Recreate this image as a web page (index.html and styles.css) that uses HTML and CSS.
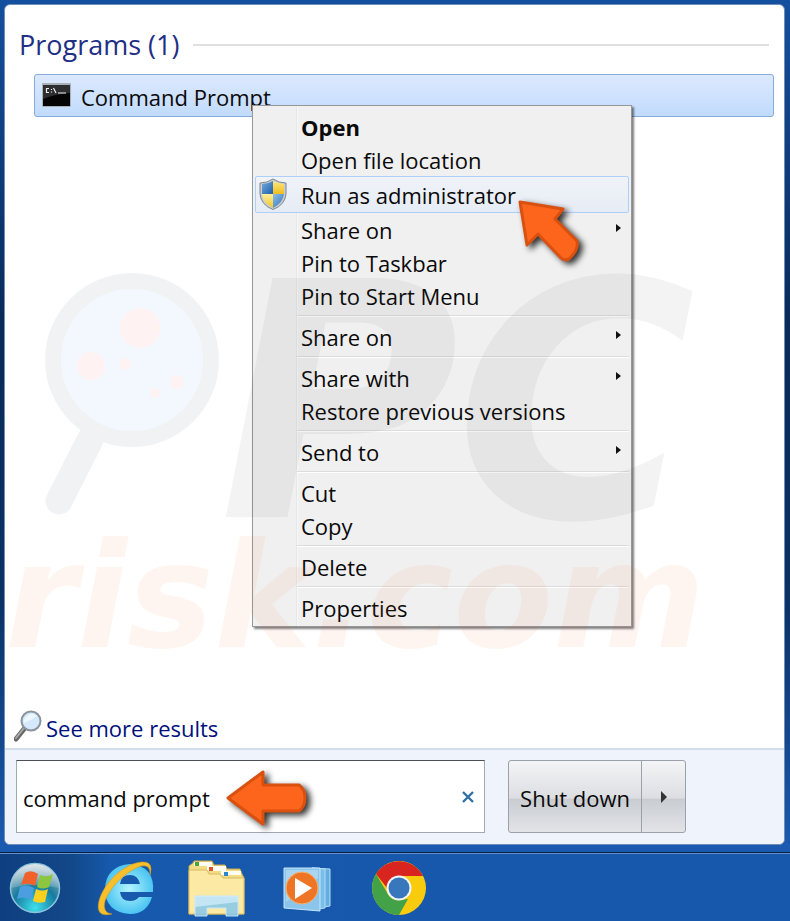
FILE: index.html
```html
<!DOCTYPE html>
<html lang="en">
<head>
    <meta charset="UTF-8">
    <meta name="viewport" content="width=device-width, initial-scale=1.0">
    <title>Start Menu</title>
    <link rel="stylesheet" href="styles.css">
</head>
<body>
    <main class="start-menu">
        <section class="results">
            <div class="group-title">
                <h1>Programs (1)</h1>
                <hr>
            </div>
            <div class="result-wrap">
                <a class="result" href="#">
                    <svg class="cmd-icon" width="31" height="26" viewBox="0 0 31 26">
                        <rect x="1" y="1" width="29" height="24" rx="1" fill="#a9b0b8"/>
                        <rect x="2" y="3" width="27" height="21" fill="#050505"/>
                        <path d="M2 3h27v8Q14 12 2 17z" fill="#2c2e30"/>
                        <path d="M8 6.500H5.500V10.500H8M10.500 7v1M10.500 9.500v1M12.500 6l2.500 5M17 11h8" fill="none" stroke="#eee" stroke-width="1.200"/>
                    </svg>
                    <span>Command Prompt</span>
                </a>
                <div class="context-menu">
                    <button class="item"><b>Open</b></button>
                    <button class="item">Open file location</button>
                    <button class="item active">
                        <svg class="shield" width="28" height="32" viewBox="0 0 28 32">
                            <defs>
                                <clipPath id="shieldClip"><path d="M14 3Q19 6 25 6V16Q24 25 14 30Q4 25 3 16V6Q9 6 14 3z"/></clipPath>
                                <linearGradient id="blueQ" x1="0" y1="0" x2="1" y2="1"><stop offset="0" stop-color="#8fbfe8"/><stop offset="1" stop-color="#1c5fae"/></linearGradient>
                                <linearGradient id="yellowQ" x1="0" y1="0" x2="0" y2="1"><stop offset="0" stop-color="#fff09a"/><stop offset="1" stop-color="#efbd1c"/></linearGradient>
                            </defs>
                            <path d="M14 1Q20 5 27 5V16Q26 27 14 31.500Q2 27 1 16V5Q8 5 14 1z" fill="#c9ced3" stroke="#7d858c"/>
                            <g clip-path="url(#shieldClip)">
                                <rect width="14" height="16" fill="url(#blueQ)"/>
                                <rect x="14" width="14" height="16" fill="url(#yellowQ)"/>
                                <rect y="16" width="14" height="16" fill="url(#yellowQ)"/>
                                <rect x="14" y="16" width="14" height="16" fill="url(#blueQ)"/>
                            </g>
                        </svg>
                        Run as administrator
                    </button>
                    <button class="item sub">Share on</button>
                    <button class="item">Pin to Taskbar</button>
                    <button class="item">Pin to Start Menu</button>
                    <hr>
                    <button class="item sub">Share on</button>
                    <hr>
                    <button class="item sub">Share with</button>
                    <button class="item">Restore previous versions</button>
                    <hr>
                    <button class="item sub">Send to</button>
                    <hr>
                    <button class="item">Cut</button>
                    <button class="item">Copy</button>
                    <hr>
                    <button class="item">Delete</button>
                    <hr>
                    <button class="item">Properties</button>
                    <svg class="arrow arrow-menu" width="74" height="74" viewBox="0 0 74 74">
                        <path d="M5 5L48 12L40 22L62 44Q64 53 54 62Q49 64 46 61L23 37L12 48z" fill="#fd651c" stroke="#d9500f" stroke-width="3" stroke-linejoin="round"/>
                    </svg>
                </div>
            </div>
            <a class="more" href="#">
                <svg width="28" height="32" viewBox="0 0 28 32">
                    <path d="M10 19L2 29" stroke="#666" stroke-width="5" stroke-linecap="round"/>
                    <path d="M10 18L2 28" stroke="#aaa" stroke-width="2" stroke-linecap="round"/>
                    <circle cx="17" cy="11" r="9.500" fill="#d4e9fb" stroke="#8c9299" stroke-width="2"/>
                    <path d="M10 13Q16 11 23 6A8 8 0 0 0 10 13z" fill="#eef7ff"/>
                </svg>
                See more results
            </a>
        </section>
        <footer class="search-bar">
            <div class="search-box">
                <input type="text" value="command prompt" aria-label="Search programs and files">
                <button class="clear" aria-label="Clear">
                    <svg width="12" height="12" viewBox="0 0 12 12"><path d="M1 1L11 11M11 1L1 11" stroke="#2f71a3" stroke-width="2.400"/></svg>
                </button>
                <svg class="arrow arrow-search" width="88" height="62" viewBox="0 0 88 62">
                    <path d="M3 31L38 5V18H74Q80 22 80 31Q80 40 74 44H38V57z" fill="#fd651c" stroke="#d9500f" stroke-width="3" stroke-linejoin="round"/>
                </svg>
            </div>
            <div class="power">
                <button class="shutdown">Shut down</button>
                <button class="power-more" aria-label="More options"></button>
            </div>
        </footer>
        <svg class="watermark" width="780" height="400" viewBox="0 0 780 400" aria-hidden="true">
            <path d="M85 175L54 236" stroke="#1e3c50" stroke-width="27" stroke-linecap="round"/>
            <circle cx="127" cy="95" r="79" fill="#4295ef" stroke="#1e3c50" stroke-width="16"/>
            <g fill="#f33">
                <circle cx="135" cy="63" r="20"/><circle cx="86" cy="101" r="14"/><circle cx="120" cy="99" r="6"/><circle cx="172" cy="117" r="7"/><circle cx="150" cy="128" r="5"/>
            </g>
            <text class="pc" x="214" y="252">P</text>
            <text class="pc" x="450" y="252">C</text>
            <text class="risk" x="0" y="382">risk.com</text>
        </svg>
    </main>
    <nav class="taskbar">
        <button aria-label="Start">
            <svg width="56" height="56" viewBox="0 0 56 56">
                <defs>
                    <radialGradient id="orb" cx=".5" cy=".9" r=".9"><stop offset="0" stop-color="#3fe0ee"/><stop offset=".5" stop-color="#157b9f"/><stop offset="1" stop-color="#a9b9c2"/></radialGradient>
                    <linearGradient id="gloss" x1="0" y1="0" x2="0" y2="1"><stop offset="0" stop-color="#fff" stop-opacity=".65"/><stop offset="1" stop-color="#fff" stop-opacity=".15"/></linearGradient>
                </defs>
                <circle cx="28" cy="28" r="24.500" fill="url(#orb)" stroke="#8cc3dc" stroke-width="1.500"/>
                <path d="M4 28A24 24 0 0 1 52 28Q28 22 4 28z" fill="url(#gloss)"/>
                <path d="M18 13Q24 9 31 14L28 26Q21 22 14 25z" fill="#f0622a"/>
                <path d="M33 15Q39 18 46 14L42 27Q36 30 30 27z" fill="#8cc63f"/>
                <path d="M13 27Q20 24 27 28L24 40Q17 36 10 39z" fill="#4b9fe0"/>
                <path d="M29 29Q35 32 41 29L38 42Q31 44 26 41z" fill="#fcd01e"/>
            </svg>
        </button>
        <button aria-label="Internet Explorer">
            <svg width="60" height="60" viewBox="0 0 60 60">
                <defs><radialGradient id="ie"><stop offset="0" stop-color="#b2f4ff"/><stop offset="1" stop-color="#4cc5f2"/></radialGradient></defs>
                <path fill-rule="evenodd" d="M57 34H24Q25 43 34 43Q40 43 43 39H56Q51 56 34 56Q9 54 9 31Q10 8 34 6Q59 8 57 34zM24 26H44Q42 17 34 17Q25 17 24 26z" fill="url(#ie)"/>
                <path d="M54 17Q58 3 46 4C29 5 8 24 3 43Q-1 60 16 56Q6 55 9 43C15 27 31 13 45 8Q55 6 54 17z" fill="#f7bf2b" stroke="#d99a16" stroke-width=".6"/>
            </svg>
        </button>
        <button aria-label="Windows Explorer">
            <svg width="60" height="60" viewBox="0 0 60 60">
                <path d="M2 56V8L6 5L7 3H25L27 7H38L40 11H53L55 16L57 20V56z" fill="#f4dc86" stroke="#c7a64f"/>
                <path d="M7 4H25V8H7zM20 8H39V13H20zM34 13H54V17H34z" fill="#fffdf2"/>
                <path d="M8 4h4v4H8z" fill="#4aa832"/><path d="M22 9h4v4h-4z" fill="#dd5326"/><path d="M37 14h4v4h-4z" fill="#2e86c8"/>
                <path d="M2 12H20L22 16H33L36 20H57V56H2z" fill="#fbe9a4" stroke="#d8bb64"/>
                <path d="M8 58V38H51V58H39V50H20V58z" fill="#8cc9e8" fill-opacity=".9" stroke="#c5e9f8"/>
                <path d="M8 38H51V44L8 49z" fill="#d7f0fb" fill-opacity=".7"/>
            </svg>
        </button>
        <button aria-label="Windows Media Player">
            <svg width="52" height="50" viewBox="0 0 52 50">
                <path d="M30 5L48 6V43L30 46z" fill="#65ade0" stroke="#b3dcf4"/>
                <path d="M30 5L43 6V45L30 47z" fill="#79bde9" stroke="#b3dcf4"/>
                <path d="M2 5H38V48L2 45z" fill="#8cc5ec" stroke="#c6e7fa"/>
                <path d="M4 7H36V15L4 39z" fill="#bddff5" fill-opacity=".6"/>
                <circle cx="20" cy="25" r="16" fill="#ee7426" stroke="#f8b06d"/>
                <path d="M13 15L30 25L13 36z" fill="#fff"/>
            </svg>
        </button>
        <button aria-label="Google Chrome">
            <svg width="56" height="56" viewBox="0 0 56 56">
                <circle cx="28" cy="28" r="27" fill="#f8cb0d"/>
                <path d="M5 14A27 27 0 0 1 52 16H28Q18 17 16 28z" fill="#d8251f"/>
                <path d="M5 14L17.500 35Q21 41 29 40L37 39L28 55A27 27 0 0 1 5 14z" fill="#43a247"/>
                <circle cx="28" cy="28" r="12.500" fill="#f3f5f7"/>
                <circle cx="28" cy="28" r="10.500" fill="#3877bc"/>
            </svg>
        </button>
    </nav>
</body>
</html>
```
FILE: styles.css
```css
*{
    box-sizing: border-box;
}
body{
    margin: 0;
    min-height: 100vh;
    display: flex;
    flex-direction: column;
    background: linear-gradient(#1450a0, #092a5a 35%, #0b3165 65%, #1a5ab0 92%);
    font-family: "Open Sans", "Noto Sans", sans-serif;
    font-size: 22px;
    color: #0a0a0a;
}
button, input{
    font: inherit;
    color: inherit;
    margin: 0;
    padding: 0;
    border: none;
    background: none;
}
a{
    text-decoration: none;
}
.start-menu{
    position: relative;
    flex: 1;
    display: flex;
    flex-direction: column;
    margin: 4px 5px 7px 4px;
    border: 1px solid #6f8db5;
    border-radius: 6px;
    background: #fff;
}
.results{
    flex: 1;
    display: flex;
    flex-direction: column;
    padding: 20px 10px 2px 9px;
}
.group-title{
    display: flex;
    align-items: center;
    gap: 14px;
    padding: 0 5px;
}
h1{
    margin: 0;
    font-size: 27px;
    line-height: 40px;
    font-weight: normal;
    color: #1f2f85;
}
.group-title hr{
    flex: 1;
    height: 2px;
    margin: 0;
    border: none;
    background: #dedfe1;
}
.result-wrap{
    position: relative;
    margin: 9px 0 0 20px;
}
.result{
    display: flex;
    align-items: center;
    gap: 9px;
    height: 43px;
    padding: 2px 6px 0;
    border: 1px solid #84acdd;
    border-radius: 3px;
    background: linear-gradient(#dce9fd, #c1dbfd);
    color: #0a0a0a;
}
.cmd-icon{
    margin-bottom: 4px;
}
.context-menu{
    position: absolute;
    top: 31px;
    left: 218px;
    width: 380px;
    padding: 4px 2px 2px;
    border: 1px solid #979797;
    background: linear-gradient(90deg, transparent 43px, #e6e7e7 43px, #e6e7e7 44px, #f7f7f7 44px, #f7f7f7 45px, transparent 45px) #f0f0f0;
    box-shadow: 2px 2px 2px rgba(0, 0, 0, .5);
}
.item{
    position: relative;
    display: block;
    width: 100%;
    height: 33px;
    padding-left: 46px;
    border-radius: 2px;
    line-height: 34px;
    text-align: left;
}
.item.active{
    height: 37px;
    padding-left: 45px;
    border: 1px solid #aecff7;
    background: linear-gradient(#f0f3f8, #e6ecf5);
}
.shield{
    position: absolute;
    left: 3px;
    top: 1px;
}
.item.sub::after{
    content: "";
    position: absolute;
    right: 8px;
    top: 11px;
    border: 4px solid transparent;
    border-left: 5px solid #111;
    border-right: none;
}
.context-menu hr{
    height: 2px;
    margin: 3px 0 3px 42px;
    border: none;
    border-top: 1px solid #dcdcdc;
    background: #fff;
}
.arrow{
    position: absolute;
    filter: drop-shadow(4px 3px 3px rgba(0, 0, 0, .8));
}
.arrow-menu{
    left: 262px;
    top: 91px;
}
.more{
    display: flex;
    align-items: center;
    gap: 4px;
    margin-top: auto;
    line-height: 36px;
    color: #00107c;
}
.more svg{
    margin-bottom: 4px;
}
.search-bar{
    display: flex;
    gap: 23px;
    padding: 10px 98px 11px 11px;
    border-top: 2px solid #d3dceb;
    border-radius: 0 0 5px 5px;
    background: #eff3fb;
}
.search-box{
    position: relative;
    flex: 1;
    display: flex;
    align-items: center;
    height: 73px;
    border: 1px solid #a3a8ae;
    border-top-color: #4c4f54;
    background: #fff;
}
.search-box input{
    flex: 1;
    min-width: 0;
    height: 100%;
    padding: 2px 6px 0;
    outline: none;
}
.clear{
    width: 32px;
    height: 32px;
    line-height: 0;
}
.arrow-search{
    left: 208px;
    top: 6px;
}
.power{
    display: flex;
    border: 1px solid #9ba1a9;
    border-radius: 3px;
    background: linear-gradient(#f3f4f6, #dcdee2 52%, #c9ccd1 54%, #e2e4e8);
}
.shutdown{
    width: 133px;
    padding-top: 2px;
    border-right: 1px solid #9ba1a9;
}
.power-more{
    width: 43px;
    line-height: 0;
}
.power-more::after{
    content: "";
    display: inline-block;
    border: 6px solid transparent;
    border-left: 6px solid #333;
    border-right: none;
}
.watermark{
    position: absolute;
    left: 0;
    top: 260px;
    opacity: .06;
    pointer-events: none;
}
.watermark text{
    font-family: "DejaVu Sans", sans-serif;
    font-weight: bold;
    font-style: italic;
}
.pc{
    font-size: 328px;
    fill: #444;
}
.risk{
    font-size: 146px;
    fill: #f4622d;
}
.taskbar{
    display: flex;
    align-items: center;
    gap: 31px;
    height: 69px;
    padding: 2px 5px 0;
    border-top: 1px solid #061f42;
    box-shadow: inset 0 1px #6490cb;
    background: linear-gradient(90deg, #0e3f81, #124788 70px, #1759ac 110px, #1757ac);
}
.taskbar button{
    width: 60px;
    line-height: 0;
}
```
